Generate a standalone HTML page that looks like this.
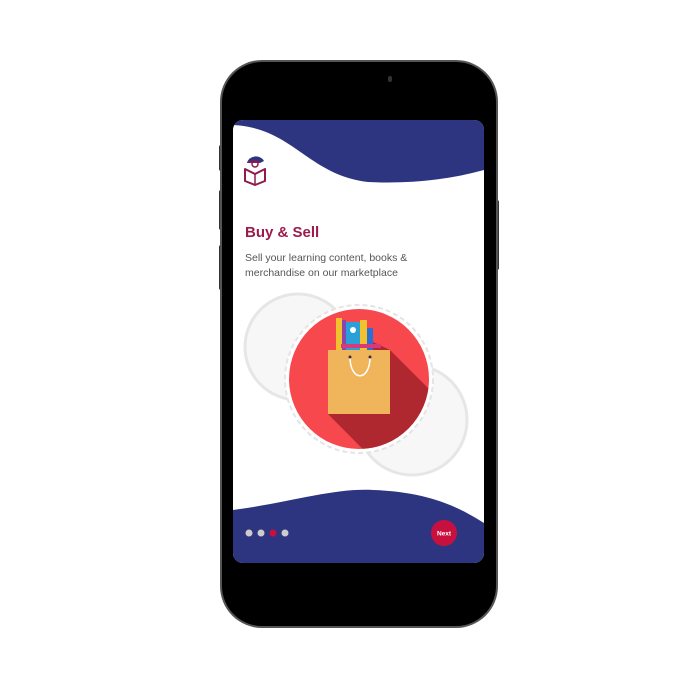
<!DOCTYPE html><html><head><style>
body{margin:0;width:700px;height:700px;background:#fff;position:relative;overflow:hidden;font-family:"Liberation Sans",sans-serif}
.a{position:absolute}
</style></head><body>
<div class="a" style="left:219px;top:145px;width:4px;height:26px;background:#333;border-radius:2px"></div>
<div class="a" style="left:219px;top:190px;width:4px;height:40px;background:#333;border-radius:2px"></div>
<div class="a" style="left:219px;top:245px;width:4px;height:45px;background:#333;border-radius:2px"></div>
<div class="a" style="left:495px;top:200px;width:4px;height:70px;background:#333;border-radius:2px"></div>
<div class="a" style="left:222px;top:62px;width:274px;height:564px;background:#000;border-radius:40px;box-shadow:0 0 0 2px #555"></div>
<div class="a" style="left:388px;top:76px;width:4px;height:6px;background:#333;border-radius:2px"></div>
<svg class="a" style="left:233px;top:120px" width="251" height="443" viewBox="0 0 251 443">
<defs><clipPath id="c"><rect width="251" height="443" rx="10"/></clipPath></defs>
<g clip-path="url(#c)">
<rect width="251" height="443" fill="#fff"/>
<path d="M0 0H251V50C215 60 175 64 135 62C75 55 60 8 0 5Z" fill="#2e3580"/>
<path d="M0 390C60 382 100 368 140 370C200 372 230 390 251 403V443H0Z" fill="#2e3580"/>
<circle cx="65" cy="227" r="53" fill="#f7f7f7" stroke="#e6e6e6" stroke-width="3"/>
<circle cx="179" cy="300" r="55" fill="#f7f7f7" stroke="#e6e6e6" stroke-width="3"/>
<circle cx="126" cy="259" r="74" fill="#fff" stroke="#e4e4e4" stroke-width="2" stroke-dasharray="5 3"/>
<clipPath id="r"><circle cx="126" cy="259" r="70"/></clipPath>
<circle cx="126" cy="259" r="70" fill="#f7484e"/>
<g clip-path="url(#r)"><path d="M140 222L157 230L260 333L200 400L95 294Z" fill="#b0282f"/></g>
<rect x="103" y="198" width="6" height="32" fill="#f2c12e"/>
<rect x="109" y="200" width="4" height="30" fill="#8e44ad"/>
<rect x="113" y="202" width="14" height="28" fill="#2aa0d8"/>
<circle cx="120" cy="210" r="3" fill="#fff"/>
<rect x="127" y="200" width="7" height="30" fill="#f2c12e"/>
<rect x="134" y="208" width="6" height="22" fill="#2a6fd8"/>
<rect x="108" y="224" width="40" height="4" fill="#d63a7a"/>
<rect x="95" y="230" width="62" height="64" fill="#f0b45a"/>
<path d="M117 237C117 262 137 262 137 237" fill="none" stroke="#fff" stroke-width="1.5"/>
<circle cx="117" cy="237" r="1.5" fill="#333"/><circle cx="137" cy="237" r="1.5" fill="#333"/>
<circle cx="16" cy="413" r="3.5" fill="#ccc"/><circle cx="28" cy="413" r="3.5" fill="#ccc"/>
<circle cx="40" cy="413" r="3.5" fill="#c8103e"/><circle cx="52" cy="413" r="3.5" fill="#ccc"/>
<circle cx="211" cy="413" r="13" fill="#c8103e"/>
<text x="211" y="415.5" font-size="6.5" font-weight="bold" fill="#fff" text-anchor="middle" font-family="Liberation Sans">Next</text>
<path d="M14 43a9 8 0 0 1 17 -2l-4 2h-13z" fill="#2e3580"/>
<path d="M15 42h12" stroke="#8e1b4c" stroke-width="1.5"/>
<circle cx="22" cy="44" r="3" fill="none" stroke="#8e1b4c" stroke-width="1.5"/>
<path d="M12 49l10 5 10-5v12l-10 4-10-4z" fill="none" stroke="#8e1b4c" stroke-width="2" stroke-linejoin="round"/>
<path d="M22 54v11" stroke="#8e1b4c" stroke-width="1.5"/>
</g></svg>
<div class="a" style="left:245px;top:224px;font-size:15px;font-weight:bold;color:#9b1b4c">Buy &amp; Sell</div>
<div class="a" style="left:245px;top:251px;font-size:10.5px;line-height:15px;color:#555">Sell your learning content, books &amp;<br>merchandise on our marketplace</div>
</body></html>
